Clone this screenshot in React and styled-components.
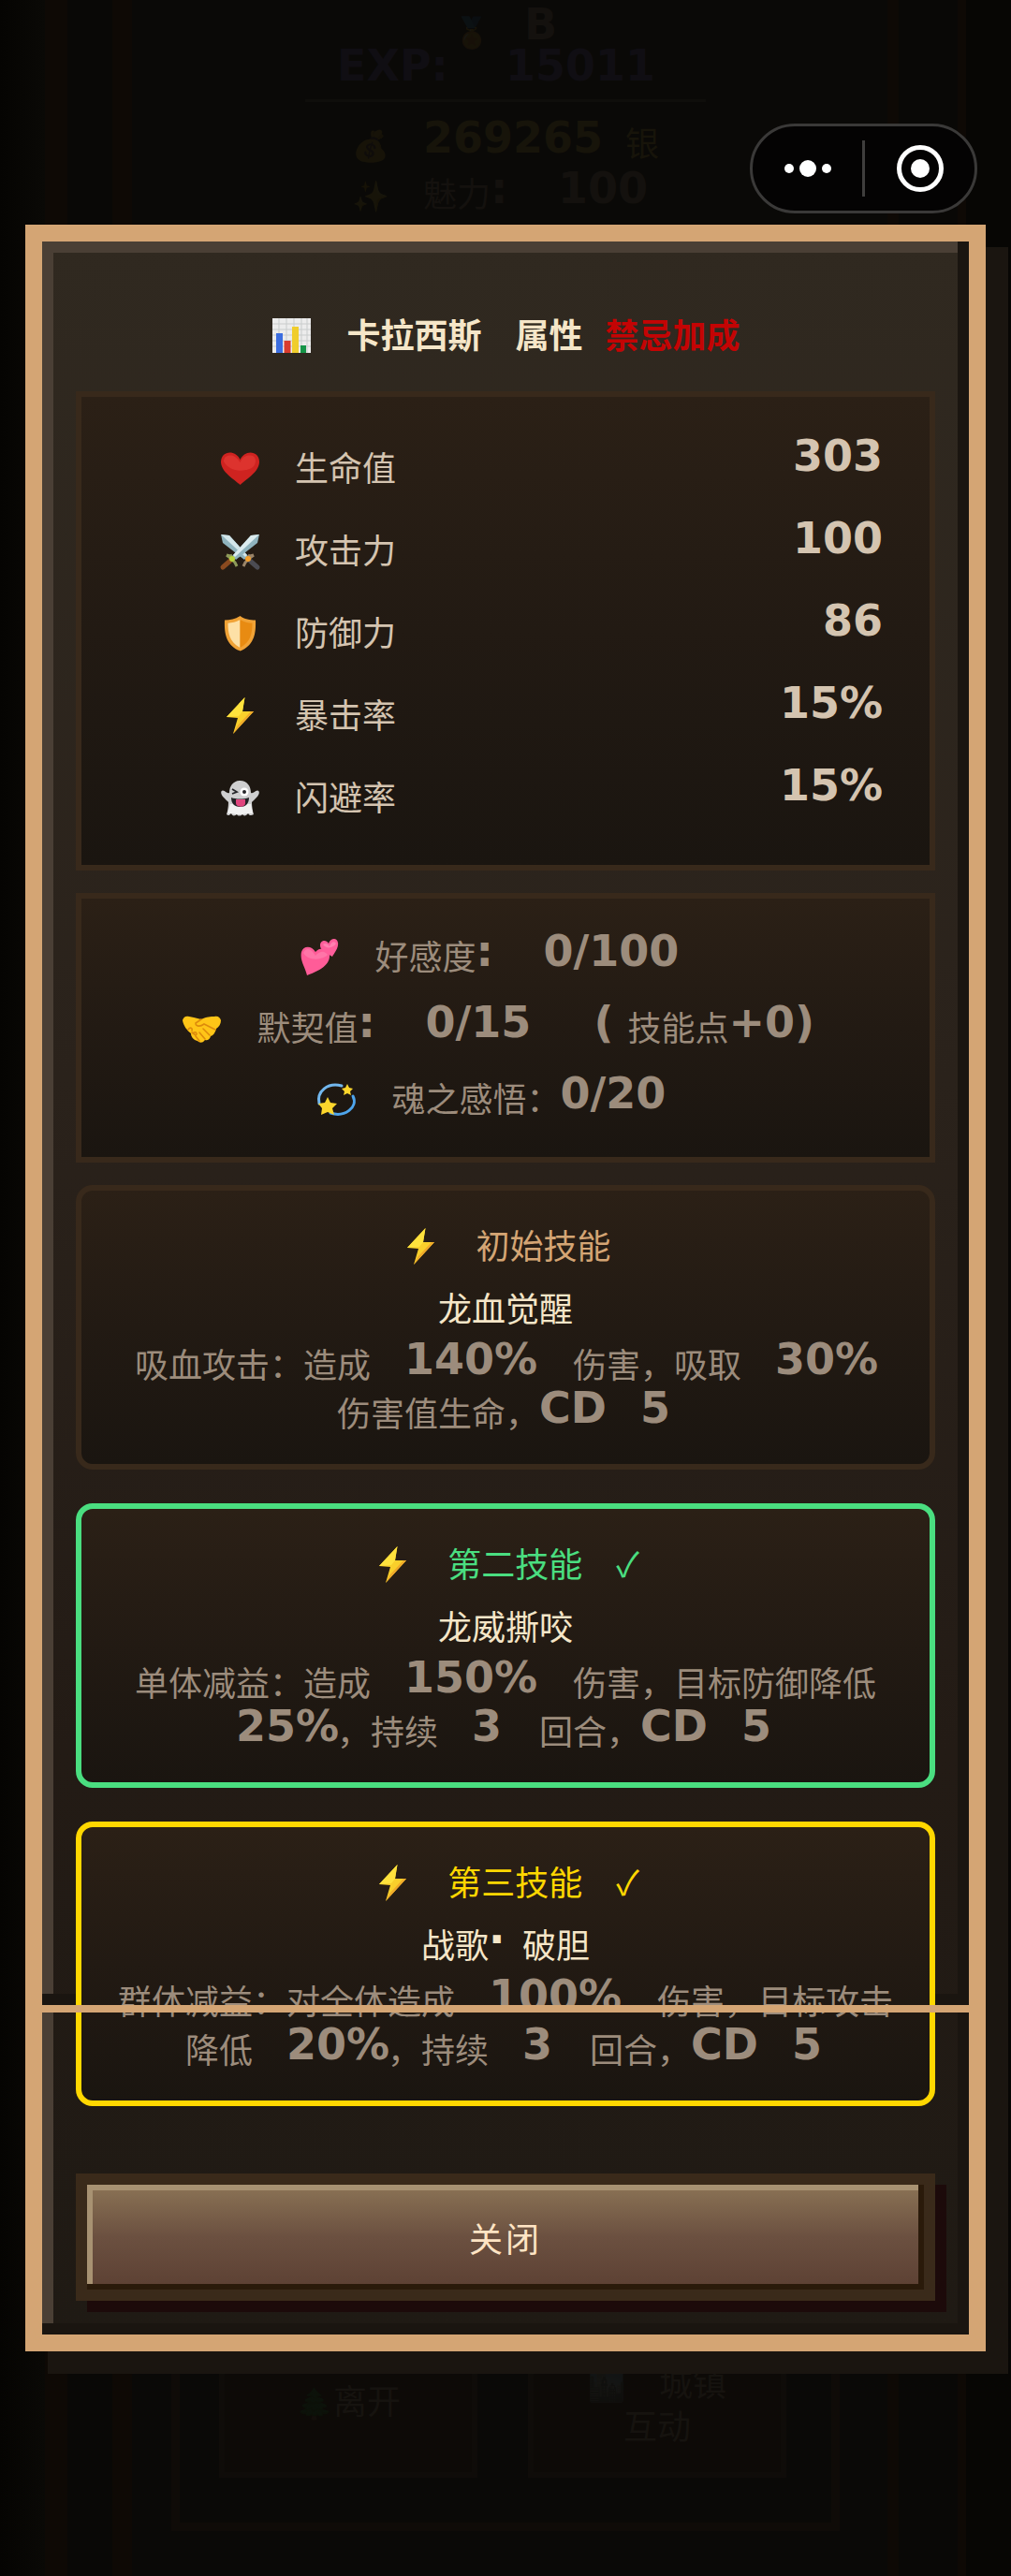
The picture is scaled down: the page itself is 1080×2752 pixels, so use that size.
import React from 'react';
import styled, { createGlobalStyle, css } from 'styled-components';

const GlobalStyle = createGlobalStyle`
  * { box-sizing: border-box; }
  body {
    margin: 0;
    background: #0a0806;
    color: #d4c4b0;
    font-family: "Noto Sans CJK SC", sans-serif;
    font-size: 36px;
  }
`;

/* ---------- page behind the dialog ---------- */

const Page = styled.div`
  position: relative;
  min-height: 100vh;
  padding: 240px 27px;
  background: linear-gradient(
    90deg,
    #050402 0, #0a0906 48px, #0e0905 48px, #0e0905 72px, #090806 72px,
    #090806 120px, #0e0905 120px, #0e0905 141px, #0a0907 141px,
    #0a0907 calc(100% - 132px), #0e0905 calc(100% - 132px), #0e0905 calc(100% - 120px),
    #090806 calc(100% - 120px), #090806 calc(100% - 57px), #0e0905 calc(100% - 57px),
    #0e0905 calc(100% - 48px), #070604 calc(100% - 48px)
  );
`;

const Scene = styled.div`
  position: absolute;
  inset: 0;
  overflow: hidden;
  display: flex;
  flex-direction: column;
  justify-content: space-between;
  padding: 8px 183px 48px;
`;

const Profile = styled.div`
  text-align: center;
`;

const ProfileLine = styled.div`
  height: ${(p) => p.$height}px;
  line-height: 44px;
  color: ${(p) => p.$color || '#14110e'};
`;

const Divider = styled.hr`
  width: 60%;
  height: 3px;
  margin: 10px auto 20px;
  border: 0;
  background: #0f0e0b;
`;

const Dim = styled.span`
  display: inline-block;
  font-size: 32px;
  line-height: 36px;
  opacity: 0.05;
`;

const Actions = styled.div`
  display: grid;
  grid-template-columns: 1fr 1fr;
  gap: 54px;
  padding: 0 48px 48px 42px;
  border: solid #0f0b08;
  border-width: 0 9px 9px;
`;

const SceneButton = styled.button`
  height: 180px;
  padding: 48px 0 36px;
  border: 6px solid #0f0c09;
  background: #0d0a07;
  color: #16130f;
  font: inherit;
  line-height: 46px;
`;

/* ---------- mini-program capsule ---------- */

const Capsule = styled.div`
  position: absolute;
  z-index: 3;
  top: 132px;
  right: 36px;
  display: flex;
  align-items: center;
  width: 243px;
  height: 96px;
  border: 3px solid #3a3938;
  border-radius: 48px;
  background: #040303;
`;

const CapsuleButton = styled.button`
  flex: 1;
  height: 90px;
  padding: 0;
  border: 0;
  background: none;

  svg { display: block; margin: auto; }
`;

const CapsuleRule = styled.span`
  width: 3px;
  height: 60px;
  background: #3f3e3d;
`;

/* ---------- dialog ---------- */

const Dialog = styled.section`
  position: relative;
  padding: 36px;
  border: 18px solid #d4a574;
  background: linear-gradient(180deg, #302920, #2a221b 40%, #231b15 72%, #1f1a14);
  box-shadow:
    24px 24px 0 #1a1510,
    inset -12px -12px 0 #1a1510,
    inset 12px 12px 0 #4a3f35;
`;

const FoldShade = styled.span`
  position: absolute;
  left: 0;
  right: 0;
  bottom: 352px;
  height: 12px;
  background: #1a1510;
`;

const FoldLine = styled.span`
  position: absolute;
  z-index: 2;
  left: 0;
  right: 0;
  bottom: 344px;
  height: 8px;
  background: #d4a574;
`;

const Title = styled.h1`
  margin: 0;
  padding: 36px 0;
  color: #f5e6c8;
  font-size: 36px;
  font-weight: 700;
  line-height: 52px;
  text-align: center;
`;

const Bonus = styled.span`
  margin-left: 24px;
  color: #c40404;
`;

const panel = css`
  position: relative;
  z-index: 1;
  border: 6px solid ${(p) => p.$accent || '#38291b'};
  background: linear-gradient(180deg, #2b2016, #221a13 50%, #1a1510);
`;

const Stats = styled.dl`
  ${panel}
  margin: 0 0 24px;
  padding: 30px 50px 30px 147px;
`;

const Stat = styled.div`
  display: flex;
  align-items: center;
  justify-content: space-between;
  height: 88px;
`;

const StatName = styled.dt`
  line-height: 52px;
`;

const StatValue = styled.dd`
  margin: 0;
  padding-bottom: 22px;
  font: bold 46px/46px "DejaVu Sans", sans-serif;
`;

const Bonds = styled.div`
  ${panel}
  margin-bottom: 24px;
  padding: 22px 24px 26px;
  color: #9c8c7c;
  line-height: 76px;
  text-align: center;
`;

const Row = styled.div`
  white-space: nowrap;
`;

const Skill = styled.article`
  ${panel}
  margin-bottom: 36px;
  padding: 24px 24px 30px;
  border-radius: 18px;
  text-align: center;
`;

const SkillTitle = styled.h2`
  margin: 0;
  color: ${(p) => p.$color};
  font-size: 36px;
  font-weight: 400;
  line-height: 66px;
`;

const SkillName = styled.div`
  color: #f5e6c8;
  line-height: 68px;
`;

const SkillText = styled.p`
  margin: 0;
  color: #9c8c7c;
  line-height: 52px;
`;

const Line = styled.span`
  display: block;
  white-space: nowrap;
`;

const Pixel = styled.span`
  display: inline-block;
  width: ${(p) => p.$cells * 36}px;
  font: bold 46px/36px "DejaVu Sans", sans-serif;
  text-align: left;
  vertical-align: 4px;
`;

const Gap = styled.span`
  display: inline-block;
  width: 36px;
`;

const Icon = styled.svg`
  display: inline-block;
  width: 45px;
  height: 42px;
  margin-right: 36px;
  vertical-align: -8px;
`;

const CloseButton = styled.button`
  display: block;
  position: relative;
  z-index: 1;
  width: 100%;
  height: 136px;
  margin-top: 72px;
  border: 12px solid #3a2a1a;
  background: linear-gradient(180deg, #8b7355, #6b5040 50%, #5c4033);
  box-shadow:
    12px 12px 0 #1c0a0a,
    inset -6px -6px 0 #2a1a0a,
    inset 6px 6px 0 #a89272;
  color: #ffe4c4;
  font: inherit;
  letter-spacing: 3px;
  cursor: pointer;
`;

/* ---------- icons ---------- */

const art = {
  chart: (
    <>
      <rect x="2" y="2" width="41" height="37" fill="#ececec" />
      <path d="M2 8H43M2 14H43M2 20H43M2 26H43M2 32H43M9 2V39M17 2V39M25 2V39M33 2V39M39 2V39" stroke="#c9cccc" strokeWidth="1" />
      <rect x="6" y="18" width="7" height="21" fill="#3b6de0" />
      <rect x="14.5" y="26" width="7" height="13" fill="#d93c2f" />
      <rect x="23" y="11" width="7" height="28" fill="#f0cd2c" />
      <rect x="32" y="31" width="6" height="8" fill="#159447" />
    </>
  ),
  heart: (
    <>
      <path d="M22.500 38C16 32 2 24 2 13.500C2 7 6.500 3.500 11.500 3.500C16 3.500 20.500 6.500 22.500 11C24.500 6.500 29 3.500 33.500 3.500C38.500 3.500 43 7 43 13.500C43 24 29 32 22.500 38Z" fill="#cf2320" />
      <path d="M5 13C5 8 9 6 13 6.500C18 7 21 12 22.500 14C25 8 29 6 34 6.500C40 7.500 40 14 37 18C32 24 12 26 5 13Z" fill="#e23b34" opacity=".7" />
    </>
  ),
  swords: (
    <>
      <path d="M2 3L11 4L31 26L27 30L4 12Z" fill="#8fb3bd" />
      <path d="M2 3L11 4L30 25L28 27Z" fill="#d3e6ea" />
      <path d="M43 3L34 4L14 26L18 30L41 12Z" fill="#8fb3bd" />
      <path d="M43 3L34 4L15 25L17 27Z" fill="#dcecef" />
      <path d="M12 31L4 38" stroke="#8a4a1f" strokeWidth="5" strokeLinecap="round" />
      <path d="M33 31L41 38" stroke="#4b4b52" strokeWidth="5" strokeLinecap="round" />
      <path d="M8 25L12 28L17 33L19 37M8 25L12 26L14 25" stroke="#8e9a5a" strokeWidth="3" fill="none" />
      <path d="M37 25L33 28L28 33L26 37M37 25L33 26L31 25" stroke="#9a8468" strokeWidth="3" fill="none" />
      <circle cx="14" cy="29" r="3" fill="#b9d43c" />
      <circle cx="31" cy="29" r="3" fill="#f3a02f" />
    </>
  ),
  shield: (
    <>
      <path d="M22.500 2C27 5.500 33 6.500 39 6.500C39.500 20 38 33 22.500 39.500C7 33 5.500 20 6 6.500C12 6.500 18 5.500 22.500 2Z" fill="#f0a236" />
      <path d="M22.500 6C18.500 8.500 14 9.500 9.500 9.700C9.500 20 11 30 22.500 36Z" fill="#fde0a6" />
      <path d="M22.500 6C26.500 8.500 31 9.500 35.500 9.700C35.500 20 34 30 22.500 36Z" fill="#e88b12" />
    </>
  ),
  bolt: (
    <>
      <path d="M27.500 1L8 22L20 23L15 40L37 16L25 16Z" fill="#f9cf2b" />
      <path d="M27.500 1L8 22L21 21L25 16Z" fill="#ffe23d" />
      <path d="M15 40L37 16L34 16L20 31Z" fill="#efa92a" />
    </>
  ),
  ghost: (
    <>
      <path d="M22.500 2C30 2 34 8 34 15C37 16 38 13 41 12.500C44 13 43 17 40 20C38 22 36 24 35 25C35 30 36 35 37 38C34 40 32 39 31 37C29 40 26 40 25 38C23 40 20 40 19 38C17 40 14 40 13 37C11 39 10 40 8 38C9 35 10 30 10 25C9 24 7 22 5 20C2 17 1 13 4 12.500C7 13 8 16 11 15C11 8 15 2 22.500 2Z" fill="#cfcfd0" />
      <path d="M12 27H34L36 37L31 37L25 38L19 38L13 37L9 37Z" fill="#f1f1f1" />
      <circle cx="27" cy="14" r="4.500" fill="#fff" />
      <circle cx="27" cy="14" r="2" fill="#26262a" />
      <path d="M14 11L19 14L14 16" fill="none" stroke="#26262a" strokeWidth="1.800" />
      <path d="M13 20C18 22 26 22 32 20C32 27 28 30 22.500 30C17 30 13 27 13 20Z" fill="#222226" />
      <path d="M18 22H28V26C28 31 18 31 18 26Z" fill="#e0457e" />
    </>
  ),
  hearts: (
    <>
      <path d="M9 40C7 31 1 24 3 15C5 8 14 8 18 15C23 9 32 11 33 18C34 30 19 36 9 40Z" fill="#ff5c98" />
      <path d="M5 16C8 9 14 12 18 19C23 13 29 14 31 18C27 23 11 26 5 16Z" fill="#ff85b3" opacity=".6" />
      <path d="M36 20C32 17 23 14 23 8C23 3 29 1 32 6C34 0 41 -1 42 5C43 11 38 16 36 20Z" fill="#ff5e9b" />
      <path d="M26 7C28 5 31 6 33 9C35 4 38 3 40 6C38 10 30 13 26 7Z" fill="#ff8fb9" opacity=".7" />
    </>
  ),
  handshake: (
    <>
      <path d="M2 12C3 8 6 7 9 8L14 9L22 11C28 8 32 8 36 8C40 7 42 9 43 12C43 16 41 19 38 21C37 25 35 28 32 29C31 33 28 34 26 33C23 37 20 36 18 34C13 33 11 29 11 26C7 23 3 18 2 12Z" fill="#ffc517" />
      <path d="M22 11L16 15C16 19 21 19 25 16L37 22M31 28L24 21M26 32L20 25M20 34L16 29M12 25L16 28C18 27 17 24 14 25M8 22C10 19 13 20 12 23" fill="none" stroke="#dd8b0c" strokeWidth="1.600" strokeLinecap="round" />
    </>
  ),
  dizzy: (
    <>
      <path d="M28 6C13 2 1 12 4 25" fill="none" stroke="#72b7ee" strokeWidth="3" strokeLinecap="round" />
      <path d="M40 17C46 29 31 40 16 35" fill="none" stroke="#4ea5ec" strokeWidth="3" strokeLinecap="round" />
      <path d="M13 18L16 24L23 25L18 30L20 37L13 34L6 37L7 30L3 25L10 24Z" fill="#fcd62c" />
      <path d="M34 4L36 8L40 9L37 12L38 16L34 14L30 16L31 12L28 9L32 8Z" fill="#fcd62c" />
    </>
  ),
};

function Glyph({ name }) {
  return (
    <Icon viewBox="0 0 45 42" aria-hidden="true">
      {art[name]}
    </Icon>
  );
}

/* Latin runs take one 36px cell per character; a space is one empty cell. */
function Mixed({ text }) {
  return text
    .split(/([\x21-\x7e\u00b7]+| )/)
    .filter(Boolean)
    .map((part, i) => {
      if (part === ' ') return <Gap key={i}>{' '}</Gap>;
      if (/^[\x21-\x7e\u00b7]+$/.test(part)) {
        return <Pixel key={i} $cells={part.length}>{part}</Pixel>;
      }
      return <React.Fragment key={i}>{part}</React.Fragment>;
    });
}

/* ---------- data ---------- */

const stats = [
  ['heart', '生命值', '303'],
  ['swords', '攻击力', '100'],
  ['shield', '防御力', '86'],
  ['bolt', '暴击率', '15%'],
  ['ghost', '闪避率', '15%'],
];

const bonds = [
  ['hearts', '好感度: 0/100'],
  ['handshake', '默契值: 0/15 (技能点+0)'],
  ['dizzy', '魂之感悟：0/20'],
];

const skills = [
  {
    title: '初始技能',
    color: '#d4a574',
    name: '龙血觉醒',
    lines: ['吸血攻击：造成 140% 伤害，吸取 30%', '伤害值生命，CD 5'],
  },
  {
    title: '第二技能',
    color: '#4ade80',
    accent: '#4ade80',
    learned: true,
    name: '龙威撕咬',
    lines: ['单体减益：造成 150% 伤害，目标防御降低', '25%，持续 3 回合，CD 5'],
  },
  {
    title: '第三技能',
    color: '#ffd700',
    accent: '#ffd700',
    learned: true,
    name: '战歌·破胆',
    lines: ['群体减益：对全体造成 100% 伤害，目标攻击', '降低 20%，持续 3 回合，CD 5'],
  },
];

export default function App() {
  return (
    <Page>
      <GlobalStyle />
      <Scene>
        <Profile>
          <ProfileLine $height={44}><Dim>🏅</Dim><Mixed text=" B" /></ProfileLine>
          <ProfileLine $height={44} $color="#100e13"><Mixed text="EXP: 15011" /></ProfileLine>
          <Divider />
          <ProfileLine $height={54} $color="#17140a"><Dim>💰</Dim><Mixed text=" 269265银" /></ProfileLine>
          <ProfileLine $height={54}><Dim>✨</Dim><Mixed text=" 魅力: 100" /></ProfileLine>
        </Profile>
        <Actions>
          <SceneButton type="button"><Dim>🌲</Dim>离开</SceneButton>
          <SceneButton type="button"><Dim>🏙️</Dim><Gap />城镇<br />互动</SceneButton>
        </Actions>
      </Scene>

      <Capsule>
        <CapsuleButton type="button" aria-label="更多">
          <svg width="54" height="20" viewBox="0 0 54 20" fill="#fff">
            <circle cx="7" cy="10" r="5" />
            <circle cx="27" cy="10" r="9" />
            <circle cx="47" cy="10" r="5" />
          </svg>
        </CapsuleButton>
        <CapsuleRule />
        <CapsuleButton type="button" aria-label="关闭小程序">
          <svg width="50" height="50" viewBox="0 0 50 50">
            <circle cx="25" cy="25" r="22.500" fill="none" stroke="#fff" strokeWidth="5" />
            <circle cx="25" cy="25" r="10" fill="#fff" />
          </svg>
        </CapsuleButton>
      </Capsule>

      <Dialog role="dialog" aria-labelledby="attr-title">
        <FoldShade />
        <FoldLine />
        <Title id="attr-title">
          <Glyph name="chart" />
          <Mixed text="卡拉西斯 属性" />
          <Bonus>禁忌加成</Bonus>
        </Title>

        <Stats>
          {stats.map(([icon, name, value]) => (
            <Stat key={name}>
              <StatName><Glyph name={icon} />{name}</StatName>
              <StatValue>{value}</StatValue>
            </Stat>
          ))}
        </Stats>

        <Bonds>
          {bonds.map(([icon, text]) => (
            <Row key={icon}><Glyph name={icon} /><Mixed text={text} /></Row>
          ))}
        </Bonds>

        {skills.map((s) => (
          <Skill key={s.title} $accent={s.accent}>
            <SkillTitle $color={s.color}>
              <Glyph name="bolt" />
              {s.title}
              {s.learned && <><Gap />✓</>}
            </SkillTitle>
            <SkillName><Mixed text={s.name} /></SkillName>
            <SkillText>
              {s.lines.map((line) => (
                <Line key={line}><Mixed text={line} /></Line>
              ))}
            </SkillText>
          </Skill>
        ))}

        <CloseButton type="button">关闭</CloseButton>
      </Dialog>
    </Page>
  );
}
